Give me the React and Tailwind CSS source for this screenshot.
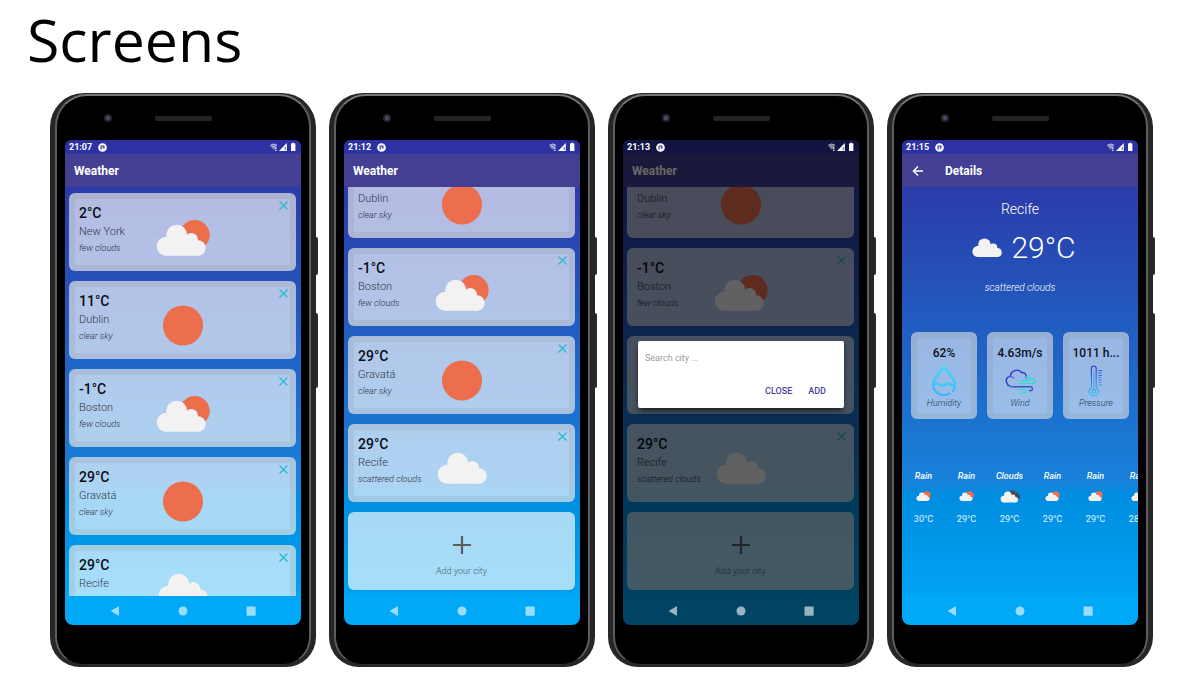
import React from "react";

const CITIES = {
  newYork: { temp: "2°C", city: "New York", sky: "few clouds", icon: "partly" },
  dublin: { temp: "11°C", city: "Dublin", sky: "clear sky", icon: "sun" },
  boston: { temp: "-1°C", city: "Boston", sky: "few clouds", icon: "partly" },
  gravata: { temp: "29°C", city: "Gravatá", sky: "clear sky", icon: "sun" },
  recife: { temp: "29°C", city: "Recife", sky: "scattered clouds", icon: "cloud" },
};

const FORECAST = [
  { name: "Rain", temp: "30°C", icon: "partly" },
  { name: "Rain", temp: "29°C", icon: "partly" },
  { name: "Clouds", temp: "29°C", icon: "overcast" },
  { name: "Rain", temp: "29°C", icon: "partly" },
  { name: "Rain", temp: "29°C", icon: "partly" },
  { name: "Rain", temp: "28°C", icon: "partly" },
];

function CloudShape({ fill = "#f2f2f2" }) {
  return (
    <g fill={fill}>
      <circle cx="13.2" cy="30.2" r="9.5" />
      <circle cx="23.7" cy="19.2" r="10.5" />
      <circle cx="38.3" cy="23.8" r="6.8" />
      <circle cx="45" cy="32" r="7.7" />
      <path d="M13 22L24 16L38 22L45 28V39.7H13Z" />
    </g>
  );
}

function SkyIcon({ kind, className, viewBox = "0 0 60 44" }) {
  return (
    <svg viewBox={viewBox} className={className} aria-hidden="true">
      {kind === "sun" && <circle cx="30" cy="21.5" r="20" fill="#ec6e4c" />}
      {kind === "partly" && (
        <>
          <circle cx="41.7" cy="19" r="15" fill="#ec6e4c" />
          <CloudShape />
        </>
      )}
      {kind === "cloud" && (
        <g transform="translate(2 -3)">
          <CloudShape />
        </g>
      )}
      {kind === "overcast" && (
        <>
          <g transform="translate(19 -1) scale(0.75)">
            <CloudShape fill="#48484a" />
          </g>
          <CloudShape />
        </>
      )}
    </svg>
  );
}

function StatusBar({ time }) {
  return (
    <div className="relative z-20 flex h-[14px] shrink-0 items-center pl-1 pr-[5px] text-white">
      <span className="text-[9px] leading-3 font-bold">{time}</span>
      <svg viewBox="0 0 10 10" className="ml-[6px] size-[9px]" aria-hidden="true">
        <circle cx="5" cy="5" r="4.8" fill="#fff" />
        <path d="M3.4 7.4V3.4H6.6V5.4H5.2" fill="none" stroke="#33309a" strokeWidth="1.2" />
      </svg>
      <svg viewBox="0 0 27 10" className="ml-auto h-[10px] w-[27px]" aria-hidden="true">
        <path d="M0.8 3.2Q4.5 -0.2 8.4 3.2L4.8 8Z" fill="#fff" opacity="0.4" />
        <path d="M1.4 3.4Q4.6 0.8 8 3.2M3 5.2Q4.6 4 6.4 5.1" fill="none" stroke="#fff" strokeWidth="0.7" opacity="0.6" />
        <path d="M6.8 5.6V7.2M6.8 8V9" stroke="#fff" strokeWidth="1.3" />
        <path d="M17.8 1V9H10Z" fill="#fff" />
        <path d="M16.2 5V8" stroke="#33309a" strokeWidth="0.8" />
        <path d="M23.2 0.8H25.2V1.6H26.4V9H22V1.6H23.2Z" fill="#fff" />
      </svg>
    </div>
  );
}

function AppBar({ title, back }) {
  return (
    <header className="flex h-[33px] shrink-0 items-center bg-[#433f93] px-[9px] text-white">
      {back && (
        <button type="button" aria-label="Back" className="mr-5 flex w-[14px] justify-center">
          <svg viewBox="0 0 12 12" className="size-3" aria-hidden="true">
            <path d="M11 6H1.6M6 1.4L1.4 6L6 10.6" fill="none" stroke="#fff" strokeWidth="1.4" />
          </svg>
        </button>
      )}
      <h2 className="text-[12px] leading-4 font-bold">{title}</h2>
    </header>
  );
}

function NavBar() {
  return (
    <nav className="relative z-20 flex h-[29px] shrink-0 items-center justify-center gap-[58px] fill-white/60">
      <button type="button" aria-label="Back">
        <svg viewBox="0 0 10 10" className="size-[10px]"><path d="M9 0V10L0.5 5Z" /></svg>
      </button>
      <button type="button" aria-label="Home">
        <svg viewBox="0 0 10 10" className="size-[10px]"><circle cx="5" cy="5" r="4.5" /></svg>
      </button>
      <button type="button" aria-label="Recent apps">
        <svg viewBox="0 0 10 10" className="size-[10px]"><rect x="0.5" y="0.5" width="9.2" height="9.2" rx="0.6" /></svg>
      </button>
    </nav>
  );
}

function Phone({ time, title, back, children, overlay }) {
  return (
    <section className="relative min-w-0 flex-1 rounded-t-[34px] rounded-b-[30px] bg-[#262626] px-[5px] pt-[1px] pb-[2px]">
      <span className="absolute top-[144px] left-full h-[38px] w-[2px] rounded-r-xs bg-[#2b2b2d]" />
      <span className="absolute top-[220px] left-full h-[75px] w-[2px] rounded-r-xs bg-[#2b2b2d]" />
      <div className="rounded-t-[32px] rounded-b-[28px] border-x-2 border-t-2 border-b border-x-[#5c5d61] border-t-[#77777a] border-b-[#2b2b2b] bg-black px-2 pb-[39px]">
        <div className="-mx-1 grid h-[44px] grid-cols-[1fr_57px_1fr] items-center justify-items-center">
          <span className="flex size-2 items-center justify-center rounded-full bg-[#25262f]">
            <span className="size-1 rounded-full bg-[#48506c]" />
          </span>
          <span className="h-[5px] w-full rounded-xs bg-[#242424]" />
        </div>
        <div className="relative flex aspect-[236/485] flex-col overflow-hidden rounded-t-md rounded-b-lg bg-[linear-gradient(180deg,#2e30a2_0%,#1782da_71%,#008de1_73%,#00a2f1_93%,#00a9f7_95%)]">
          <StatusBar time={time} />
          <AppBar title={title} back={back} />
          {children}
          <NavBar />
          {overlay}
        </div>
      </div>
    </section>
  );
}

function CityCard({ data, flat }) {
  return (
    <article
      className={`grid h-[78px] shrink-0 grid-cols-[1fr_60px_1fr] overflow-hidden rounded-md border-[6px] bg-white/65 bg-clip-border pt-[5px] ${
        flat ? "border-transparent" : "border-[#80807a]/15"
      }`}
    >
      <div className="pl-1 whitespace-nowrap">
        <p className="text-[14px] leading-[18px] font-medium text-[#0b0d16]">{data.temp}</p>
        <h3 className="text-[11px] leading-5 font-light text-[#33384a]">{data.city}</h3>
        <p className="text-[9px] leading-3 font-light text-[#2c3144] italic">{data.sky}</p>
      </div>
      <SkyIcon kind={data.icon} className="mt-3 h-[44px] w-[60px]" />
      <button type="button" aria-label={`Remove ${data.city}`} className="-mt-[3px] mr-[2px] self-start justify-self-end">
        <svg viewBox="0 0 9 9" className="size-[9px]" aria-hidden="true">
          <path d="M0.5 0.5L8.5 8.5M8.5 0.5L0.5 8.5" stroke="#2bb9d2" strokeWidth="1.2" />
        </svg>
      </button>
    </article>
  );
}

function AddCard() {
  return (
    <button type="button" className="flex h-[78px] shrink-0 flex-col items-center rounded-md bg-white/65 pt-6 shadow-xs">
      <svg viewBox="0 0 18 18" className="size-[18px]" aria-hidden="true">
        <path d="M9 0V18M0 9H18" stroke="#5b5b5b" strokeWidth="2.2" />
      </svg>
      <span className="mt-[11px] text-[9px] leading-3 font-light text-[#4c6470]">Add your city</span>
    </button>
  );
}

function CityList({ cities, scrolled, flat }) {
  return (
    <div
      className={`flex min-h-0 flex-1 flex-col gap-[10px] overflow-hidden pr-[5px] pl-1 ${
        scrolled ? "justify-end pb-[6px]" : "pt-[6px]"
      }`}
    >
      {cities.map((c) => (
        <CityCard key={c.city} data={c} flat={flat} />
      ))}
      {scrolled && <AddCard />}
    </div>
  );
}

function SearchDialog() {
  return (
    <div className="absolute inset-0 z-10 flex items-center bg-black/60 px-[15px] pt-[14px] pb-[31px]">
      <form
        role="dialog"
        aria-label="Add a city"
        onSubmit={(e) => e.preventDefault()}
        className="flex h-[67px] w-full flex-col justify-between rounded-xs bg-white px-[7px] pt-[11px] pb-[11px] shadow-md shadow-black/50"
      >
        <input
          aria-label="Search city"
          placeholder="Search city ..."
          className="w-full text-[9px] leading-3 text-[#222] outline-none placeholder:text-[#9c9c9c]"
        />
        <div className="flex justify-end gap-4 pr-[11px] text-[9px] leading-3 font-medium text-[#4a3f9c]">
          <button type="button">CLOSE</button>
          <button type="submit">ADD</button>
        </div>
      </form>
    </div>
  );
}

function HumidityIcon() {
  return (
    <svg viewBox="0 0 26 32" className="h-[32px] w-[26px]" fill="none" strokeWidth="2.3" strokeLinecap="round" aria-hidden="true">
      <defs>
        <linearGradient id="drop" x1="0" y1="0" x2="0" y2="1">
          <stop offset="0" stopColor="#35dcfb" />
          <stop offset="1" stopColor="#3fb4fb" />
        </linearGradient>
      </defs>
      <path
        d="M18.5 28.6A11 11 0 0 1 2 19.5C2 14 9 7 13 1.6C17 7 24 14 24 19.5C24 22 23.4 24.2 22 26"
        stroke="url(#drop)"
      />
      <path d="M2.5 20C5 18 6.5 18 8.6 19.6S12 21.4 14 19.8S18 18 20 19.6S22.6 20.6 23.6 20" stroke="#3cc8fb" />
    </svg>
  );
}

function WindIcon() {
  return (
    <svg viewBox="0 0 32 32" className="size-[32px]" fill="none" strokeWidth="1.4" strokeLinecap="round" aria-hidden="true">
      <path d="M4 20C0.6 16 2.6 11.4 6.4 11.6C6.2 5.4 14.6 3 17.4 7.6C20.8 6.8 23 10 22 13" stroke="#2f35c4" />
      <path d="M6.4 11.6Q9 11.6 10 13" stroke="#5a63dd" />
      <path d="M4 20C6 22.4 8 21.8 11 21.8H26A2 2 0 1 1 25.4 25.4" stroke="#3a4ed0" />
      <path d="M15 18.6H28.4A2.4 2.4 0 1 0 26.8 14.6M18 15.8H23.4A2 2 0 1 0 22 12.8" stroke="#2fdccb" />
      <path d="M14 24.6H19.6A1.6 1.6 0 1 1 19 27.4" stroke="#38dcc8" />
    </svg>
  );
}

function PressureIcon() {
  return (
    <svg viewBox="0 0 16 32" className="h-[32px] w-[16px]" fill="none" strokeWidth="1.2" strokeLinecap="round" aria-hidden="true">
      <defs>
        <linearGradient id="tube" x1="0" y1="0" x2="0" y2="32" gradientUnits="userSpaceOnUse">
          <stop offset="0" stopColor="#3a2fd0" />
          <stop offset="0.55" stopColor="#4a86e4" />
          <stop offset="1" stopColor="#35c9ee" />
        </linearGradient>
      </defs>
      <path d="M3.4 22.4V3.4A2.4 2.4 0 0 1 8.2 3.4V22.4A4.6 4.6 0 1 1 3.4 22.4Z" stroke="url(#tube)" />
      <path d="M5.8 6V24" stroke="#3fa8ec" strokeWidth="1" />
      <circle cx="5.8" cy="26.4" r="1.8" stroke="url(#tube)" />
      <path d="M10.6 5.6H13.8M10.6 8H12.8M10.6 10.4H13.8M10.6 12.8H12.8M10.6 15.2H13.8M10.6 17.6H12.8M10.6 20H13.8" stroke="url(#tube)" strokeWidth="1" />
    </svg>
  );
}

function Metric({ value, label, children }) {
  return (
    <div className="flex h-[87px] flex-col items-center overflow-hidden rounded-md border-[6px] border-[#80807a]/15 bg-white/55 pt-[7px] whitespace-nowrap">
      <span className="text-[12px] leading-4 font-medium text-[#0d1322]">{value}</span>
      <div className="mt-1">{children}</div>
      <span className="text-[9px] leading-3 font-light text-[#27384f] italic">{label}</span>
    </div>
  );
}

function Details() {
  return (
    <div className="flex min-h-0 flex-1 flex-col overflow-hidden text-white">
      <h3 className="mt-[10px] text-center text-[14px] leading-6 font-light">Recife</h3>
      <div className="mt-[9px] flex items-center justify-center gap-[9px] pl-2">
        <SkyIcon kind="cloud" viewBox="5 5 50 33" className="h-[20px] w-[30px]" />
        <span className="text-[30px] leading-9 font-light">29°C</span>
      </div>
      <p className="mt-[14px] text-center text-[10px] leading-4 font-light italic">scattered clouds</p>
      <div className="mt-[36px] grid grid-cols-3 gap-[10px] px-[9px]">
        <Metric value="62%" label="Humidity"><HumidityIcon /></Metric>
        <Metric value="4.63m/s" label="Wind"><WindIcon /></Metric>
        <Metric value="1011 h..." label="Pressure"><PressureIcon /></Metric>
      </div>
      <ul className="mt-[51px] flex">
        {FORECAST.map((f, i) => (
          <li key={i} className="flex w-[43px] shrink-0 flex-col items-center">
            <span className="text-[9px] leading-3 font-medium italic">{f.name}</span>
            <SkyIcon
              kind={f.icon}
              viewBox="2 2 56 39"
              className={f.icon === "overcast" ? "my-[7px] h-[14px] w-[20px]" : "my-2 h-3 w-[15px]"}
            />
            <span className="mt-[3px] text-[9px] leading-3 text-white/90">{f.temp}</span>
          </li>
        ))}
      </ul>
    </div>
  );
}

export default function App() {
  const { newYork, dublin, boston, gravata, recife } = CITIES;
  return (
    <main className="min-h-screen bg-white font-['Roboto',sans-serif]">
      <h1 className="px-[27px] font-['Open_Sans',sans-serif] text-[59px] leading-[78px] text-black">Screens</h1>
      <div className="flex items-start gap-[13px] pt-[15px] pr-[47px] pl-[50px]">
        <Phone time="21:07" title="Weather">
          <CityList cities={[newYork, dublin, boston, gravata, recife]} />
        </Phone>
        <Phone time="21:12" title="Weather">
          <CityList cities={[dublin, boston, gravata, recife]} scrolled />
        </Phone>
        <Phone time="21:13" title="Weather" overlay={<SearchDialog />}>
          <CityList cities={[dublin, boston, gravata, recife]} scrolled flat />
        </Phone>
        <Phone time="21:15" title="Details" back>
          <Details />
        </Phone>
      </div>
    </main>
  );
}
